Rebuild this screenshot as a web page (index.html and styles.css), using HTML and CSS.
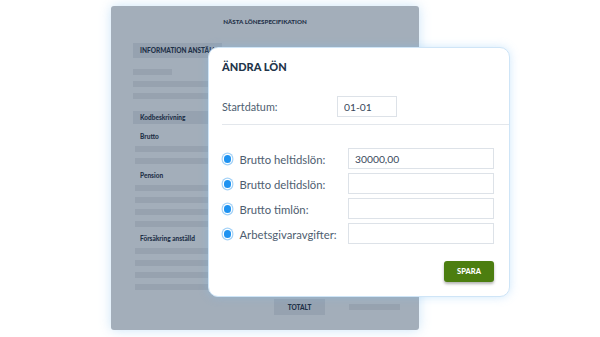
FILE: index.html
```html
<!DOCTYPE html>
<html lang="sv">
<head>
    <meta charset="UTF-8">
    <meta name="viewport" content="width=device-width, initial-scale=1.0">
    <title>Ändra lön</title>
    <link rel="stylesheet" href="styles.css">
</head>
<body>
    <main class="stage">
        <!-- payslip in the background -->
        <section class="sheet">
            <h2 class="sheet-title">NÄSTA LÖNESPECIFIKATION</h2>
            <div class="sheet-box box-info">INFORMATION ANSTÄLLD</div>
            <div class="bar bar-short"></div>
            <div class="bar"></div>
            <div class="bar"></div>
            <div class="sheet-box box-code">Kodbeskrivning</div>
            <p class="sheet-label">Brutto</p>
            <div class="bar bar-in"></div>
            <div class="bar bar-in"></div>
            <p class="sheet-label">Pension</p>
            <div class="bar bar-in"></div>
            <div class="bar bar-in"></div>
            <div class="bar bar-in"></div>
            <div class="bar bar-in"></div>
            <p class="sheet-label">Försäkring anställd</p>
            <div class="bar bar-in"></div>
            <div class="bar bar-in"></div>
            <div class="bar bar-in"></div>
            <div class="bar bar-in"></div>
            <div class="sheet-total">
                <div class="total-box">TOTALT</div>
                <div class="total-bar"></div>
            </div>
        </section>

        <!-- dialog on top -->
        <section class="dialog">
            <h1 class="dialog-title">ÄNDRA LÖN</h1>
            <div class="start-row">
                <label for="start">Startdatum:</label>
                <input type="text" id="start" class="field field-small" value="01-01">
            </div>
            <hr class="divider">
            <div class="rows">
                <div class="row">
                    <span class="radio"></span>
                    <label for="full">Brutto heltidslön:</label>
                    <input type="text" id="full" class="field" value="30000,00">
                </div>
                <div class="row">
                    <span class="radio"></span>
                    <label for="part">Brutto deltidslön:</label>
                    <input type="text" id="part" class="field">
                </div>
                <div class="row">
                    <span class="radio"></span>
                    <label for="hour">Brutto timlön:</label>
                    <input type="text" id="hour" class="field">
                </div>
                <div class="row">
                    <span class="radio"></span>
                    <label for="fee">Arbetsgivaravgifter:</label>
                    <input type="text" id="fee" class="field">
                </div>
            </div>
            <div class="actions">
                <button type="button" class="save">SPARA</button>
            </div>
        </section>
    </main>
</body>
</html>
```

FILE: styles.css
```css
/* Global */
body {
    margin: 0;
    background-color: #ffffff;
    font-family: 'Lato', 'Noto Sans', sans-serif;
    color: #1f3148;
}

.stage {
    position: relative;
    width: 600px;
    height: 337px;
    overflow: hidden;
}

/* Payslip sheet */
.sheet {
    margin: 6px 0 0 111px;
    width: 308px;
    height: 324px;
    box-sizing: border-box;
    padding: 0 0 0 22px;
    background-color: #a3aeba;
    border-radius: 3px;
    box-shadow: 0 0 12px rgba(140, 195, 240, 0.45);
    display: flex;
    flex-direction: column;
}

.sheet-title {
    margin: 11px 22px 0 0;
    height: 9px;
    font-size: 6.2px;
    line-height: 9px;
    font-weight: 900;
    text-align: center;
}

.sheet-box {
    background-color: #96a2b0;
    font-size: 6.5px;
    font-weight: 900;
    padding-left: 7px;
    display: flex;
    align-items: center;
    box-sizing: border-box;
}

.box-info {
    margin-top: 17px;
    width: 89px;
    height: 15px;
}

.box-code {
    margin-top: 12px;
    width: 250px;
    height: 13px;
}

.bar {
    margin-top: 6px;
    width: 250px;
    height: 6px;
    background-color: #97a2af;
}

.bar-short {
    margin-top: 11px;
    width: 39px;
}

.bar + .bar {
    margin-top: 6px;
}

.bar-in {
    margin-left: 2px;
    margin-top: 7px;
}

.sheet-label {
    margin: 6px 0 0 7px;
    height: 9px;
    padding-top: 1px;
    font-size: 6.5px;
    line-height: 10px;
    font-weight: 900;
}

.box-code + .sheet-label {
    margin-top: 7px;
}

.sheet-label + .bar-in {
    margin-top: 5px;
}

.sheet-total {
    margin-top: 9px;
    display: flex;
    align-items: center;
    padding-left: 141px;
    gap: 24px;
}

.total-box {
    width: 51px;
    height: 16px;
    background-color: #96a2b0;
    font-size: 6.5px;
    font-weight: 900;
    display: flex;
    align-items: center;
    justify-content: center;
}

.total-bar {
    width: 51px;
    height: 6px;
    background-color: #97a2af;
}

/* Dialog */
.dialog {
    position: absolute;
    left: 208px;
    top: 47px;
    width: 302px;
    height: 250px;
    box-sizing: border-box;
    padding: 13px 15px 14px 13px;
    background-color: #ffffff;
    border: 1px solid #cfe5f7;
    border-radius: 10px;
    box-shadow: 0 0 10px rgba(120, 190, 245, 0.35);
    display: flex;
    flex-direction: column;
}

.dialog-title {
    margin: 0;
    font-size: 11px;
    line-height: 12px;
    font-weight: 900;
    color: #22344a;
}

.start-row {
    margin-top: 23px;
    display: flex;
    align-items: center;
}

label {
    font-size: 11.3px;
    color: #4e5e70;
}

.start-row label {
    width: 115px;
    font-size: 10.8px;
}

.field {
    width: 146px;
    height: 21px;
    box-sizing: border-box;
    border: 1px solid #dde2e8;
    padding: 0 6px;
    font-family: 'Lato', 'Noto Sans', sans-serif;
    font-size: 10.3px;
    color: #38475a;
    outline: none;
}

.field-small {
    width: 60px;
}

.divider {
    margin: 7px -15px 0 0;
    border: none;
    border-top: 1px solid #e3e7ec;
}

.rows {
    margin-top: 23px;
    display: flex;
    flex-direction: column;
    gap: 4px;
}

.row {
    display: flex;
    align-items: center;
}

.row label {
    width: 109px;
    padding-top: 2px;
}

.radio {
    width: 8px;
    height: 8px;
    margin: 1px 8px 0 1.5px;
    border-radius: 50%;
    background-color: #1f93f1;
    box-shadow: 0 0 0 1.2px #ffffff, 0 0 0 2.4px #a4d2f7;
}

.actions {
    margin-top: auto;
    display: flex;
    justify-content: flex-end;
}

.save {
    width: 50px;
    height: 21px;
    background-color: #4c7e10;
    color: white;
    border: none;
    border-radius: 3px;
    font-family: 'Lato', 'Noto Sans', sans-serif;
    font-size: 7.5px;
    font-weight: 900;
    box-shadow: 0 2px 3px rgba(0, 0, 0, 0.3);
    cursor: pointer;
}
```
